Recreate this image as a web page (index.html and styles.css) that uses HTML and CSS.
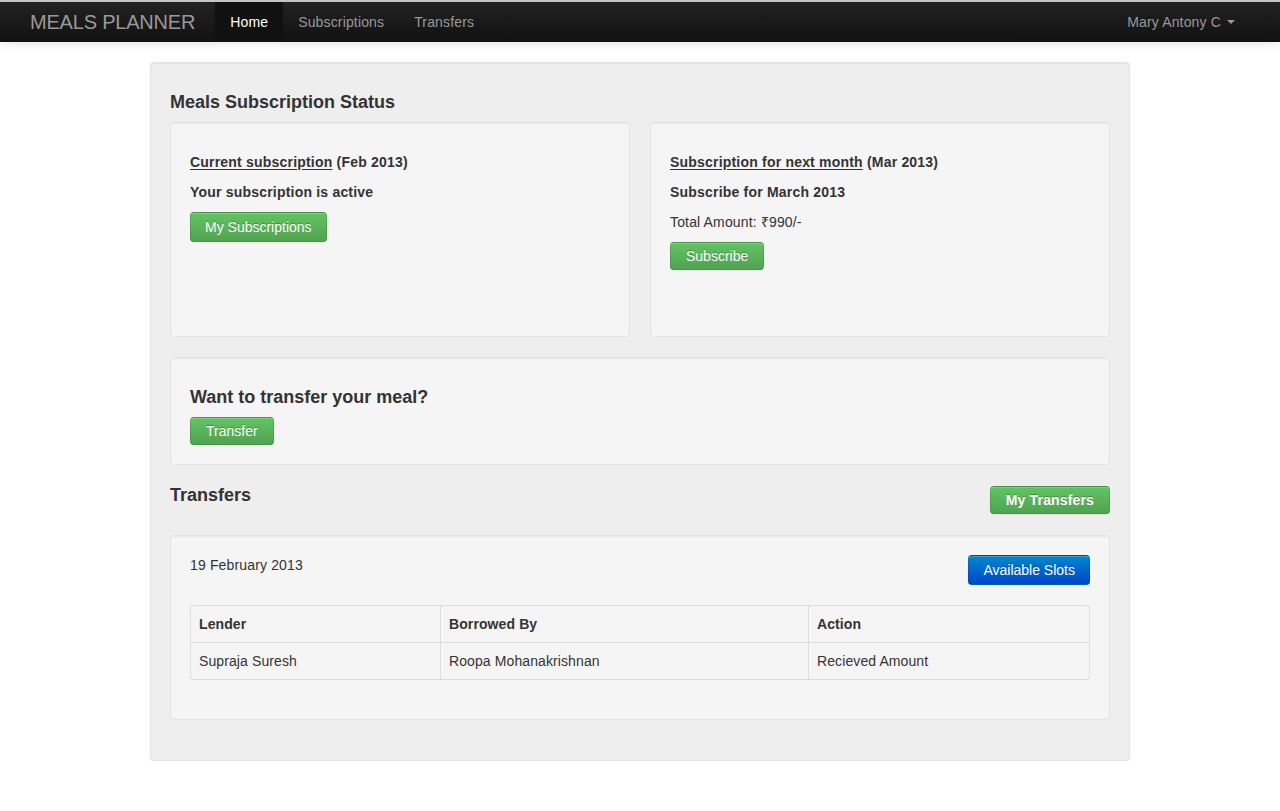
FILE: index.html
```html
<!DOCTYPE html>
<html>
<head>
<meta charset="utf-8">
<title>Meals Planner</title>
<link rel="stylesheet" href="styles.css">
</head>
<body>
<header class="navbar">
  <a class="brand">MEALS PLANNER</a>
  <nav class="nav">
    <a class="nav-link active">Home</a>
    <a class="nav-link">Subscriptions</a>
    <a class="nav-link">Transfers</a>
  </nav>
  <div class="nav-right">
    <a class="nav-link">Mary Antony C <span class="caret"></span></a>
  </div>
</header>

<main class="page">
  <h4 class="title">Meals Subscription Status</h4>
  <div class="row">
    <section class="box sub-box">
      <h5><u>Current subscription</u> (Feb 2013)</h5>
      <h5>Your subscription is active</h5>
      <div class="actions"><a class="btn btn-success">My Subscriptions</a></div>
    </section>
    <section class="box sub-box">
      <h5><u>Subscription for next month</u> (Mar 2013)</h5>
      <h5>Subscribe for March 2013</h5>
      <p class="amount">Total Amount: ₹990/-</p>
      <div class="actions"><a class="btn btn-success btn-input">Subscribe</a></div>
    </section>
  </div>

  <section class="box transfer-box">
    <h4 class="ask">Want to transfer your meal?</h4>
    <div class="actions"><a class="btn btn-success btn-input">Transfer</a></div>
  </section>

  <div class="transfers-head">
    <h4 class="head-title">Transfers</h4>
    <a class="btn btn-success btn-input btn-bold">My Transfers</a>
  </div>

  <section class="box list-box">
    <div class="list-top">
      <p class="date">19 February 2013</p>
      <a class="btn btn-primary">Available Slots</a>
    </div>
    <table class="table">
      <colgroup><col class="c1"><col class="c2"><col></colgroup>
      <thead>
        <tr><th>Lender</th><th>Borrowed By</th><th>Action</th></tr>
      </thead>
      <tbody>
        <tr><td>Supraja Suresh</td><td>Roopa Mohanakrishnan</td><td>Recieved Amount</td></tr>
      </tbody>
    </table>
  </section>
</main>
</body>
</html>
```

FILE: styles.css
```css
html, body {
  margin: 0;
  padding: 0;
}
body {
  font-family: "Liberation Sans", Arial, sans-serif;
  font-size: 14px;
  line-height: 20px;
  color: #333;
  background: #fff;
}

/* Navbar */
.navbar {
  display: flex;
  align-items: stretch;
  height: 40px;
  border-top: 2px solid #c4c4c4;
  background: linear-gradient(to bottom, #222222, #111111);
  box-shadow: 0 1px 10px rgba(0, 0, 0, 0.12);
  padding-right: 30px;
}
.brand {
  padding: 10px 20px 10px 30px;
  font-size: 20px;
  line-height: 20px;
  letter-spacing: -0.2px;
  color: #999;
  font-weight: normal;
}
.nav {
  display: flex;
}
.nav-link {
  display: block;
  padding: 10px 15px;
  line-height: 20px;
  letter-spacing: 0.15px;
  color: #999;
  text-decoration: none;
}
.nav-link.active {
  color: #fff;
  background: #111;
}
.nav-right {
  margin-left: auto;
  display: flex;
}
.caret {
  display: inline-block;
  width: 0;
  height: 0;
  vertical-align: top;
  margin-top: 8px;
  margin-left: 2px;
  border-top: 4px solid #999;
  border-left: 4px solid transparent;
  border-right: 4px solid transparent;
}

/* Page well */
.page {
  display: block;
  width: 940px;
  margin: 20px auto 0;
  padding: 19px 19px 20px;
  background: #eeeeee;
  border: 1px solid #e3e3e3;
  border-radius: 4px;
  box-shadow: inset 0 1px 1px rgba(0, 0, 0, 0.05), 0 1px 2px rgba(0, 0, 0, 0.05);
}
h4, h5 {
  font-weight: bold;
  line-height: 20px;
  color: #333;
}
h4 {
  font-size: 18px;
}
h5 {
  font-size: 14px;
  margin: 10px 0;
  letter-spacing: 0.2px;
}
.title {
  margin: 10px 0;
}
.row {
  display: flex;
  gap: 20px;
  margin-bottom: 20px;
}
.box {
  background: #f5f5f5;
  border: 1px solid #e3e3e3;
  border-radius: 4px;
  padding: 19px;
  box-shadow: inset 0 1px 1px rgba(0, 0, 0, 0.05);
}
.sub-box {
  flex: 1;
  min-height: 175px;
}
.sub-box h5 u {
  text-decoration: underline;
  text-underline-offset: 2px;
}
.amount {
  margin: 0 0 10px;
  letter-spacing: 0.15px;
}
.actions {
  display: flex;
}
.transfer-box {
  margin-bottom: 20px;
}
.ask {
  margin: 10px 0;
}

/* Buttons */
.btn {
  display: inline-block;
  padding: 4px 14px;
  font-size: 14px;
  line-height: 20px;
  color: #fff;
  text-align: center;
  text-decoration: none;
  border: 1px solid;
  border-color: rgba(0, 0, 0, 0.1) rgba(0, 0, 0, 0.1) rgba(0, 0, 0, 0.25);
  border-radius: 4px;
  text-shadow: 0 -1px 0 rgba(0, 0, 0, 0.25);
  box-shadow: inset 0 1px 0 rgba(255, 255, 255, 0.2), 0 1px 2px rgba(0, 0, 0, 0.05);
  white-space: nowrap;
}
.btn-input {
  line-height: 18px;
  padding: 4px 15px;
}
.btn-success {
  background: linear-gradient(to bottom, #62c462, #51a351);
}
.btn-primary {
  background: linear-gradient(to bottom, #0088cc, #0044cc);
}
.btn-bold {
  font-weight: bold;
  letter-spacing: 0.15px;
}

.transfers-head {
  display: flex;
  justify-content: space-between;
  align-items: flex-start;
  margin-bottom: 21px;
}
.head-title {
  margin: 0;
}
.transfers-head .btn {
  margin-top: 1px;
}

.list-box {
  margin-bottom: 20px;
}
.list-top {
  display: flex;
  justify-content: space-between;
  align-items: flex-start;
}
.date {
  margin: 0;
  letter-spacing: 0.15px;
}

/* Table */
.table {
  width: 100%;
  margin: 20px 0;
  table-layout: fixed;
  border-collapse: separate;
  border-spacing: 0;
  border: 1px solid #ddd;
  border-left: 0;
  border-radius: 4px;
}
.table col.c1 { width: 250px; }
.table col.c2 { width: 368px; }
.table th,
.table td {
  padding: 8px;
  line-height: 20px;
  text-align: left;
  vertical-align: top;
  letter-spacing: 0.1px;
  border-left: 1px solid #ddd;
  border-top: 1px solid #ddd;
}
.table th {
  font-weight: bold;
}
.table thead tr:first-child th {
  border-top: 0;
}
.table thead th:first-child {
  border-top-left-radius: 4px;
}
.table tbody tr:last-child td:first-child {
  border-bottom-left-radius: 4px;
}
```
